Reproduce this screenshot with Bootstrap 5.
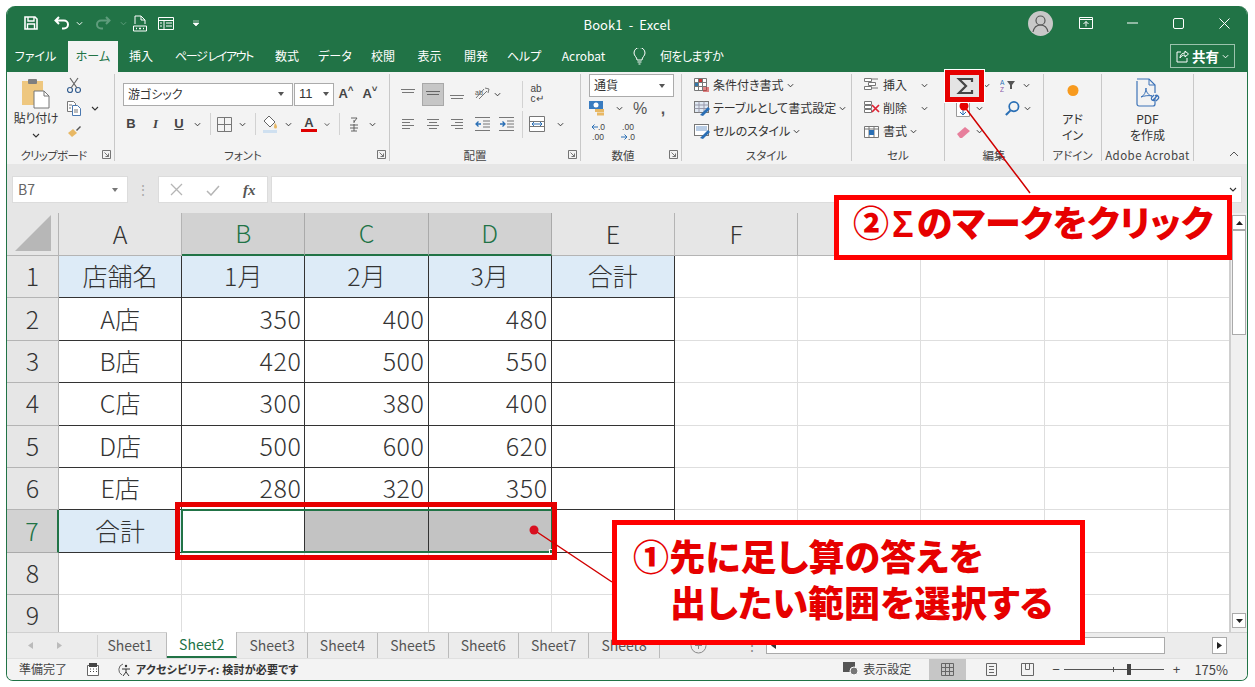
<!DOCTYPE html>
<html lang="ja"><head><meta charset="utf-8"><title>Book1 - Excel</title>
<link href="https://cdn.jsdelivr.net/npm/bootstrap@5.3.0/dist/css/bootstrap.min.css" rel="stylesheet">
<style>
html,body{margin:0;height:687px;overflow:hidden;background:#fff}
body{font-family:"Noto Sans CJK JP","Noto Sans",sans-serif;font-feature-settings:"palt";color:#333;font-size:12px;line-height:1.2}
.stage{width:1255px;height:687px;padding:6px 7px 0 6px}
.xwin{width:1242px;height:675px;border:1px solid #217346;border-top:0;border-radius:9px 9px 7px 7px;overflow:hidden;background:#f3f3f3}
.tbar{height:34px;background:#217346;color:#fff}
.tabsr{height:32px;background:#217346;color:#fff}
.side{flex:1 1 0;min-width:0}
.ce{display:flex;align-items:center;justify-content:center;flex:none}
.w6{width:6px}.w12{width:12px}.w14{width:14px}.w16{width:16px}.w18{width:18px}.w19{width:19px}.w20{width:20px}.w22{width:22px}.w24{width:24px}.w25{width:25px}.w26{width:26px}.w28{width:28px}.w30{width:30px}.w46{width:46px}.w47{width:47px}.w50{width:50px}.w69{width:69px}.w100{width:100px}.w61{width:61px}
.ms5{margin-left:5px}.ms6{margin-left:6px}.ms10{margin-left:10px}.ms14{margin-left:14px}.ms18{margin-left:18px}.ms20{margin-left:20px}.ms32{margin-left:32px}.ms47{margin-left:47px}
.tabon{height:31px;margin-top:1px;background:#f3f3f3;color:#217346}
.pagelay{letter-spacing:-1.4px}
.ask{letter-spacing:-.6px}
.ttl{font-size:13px;letter-spacing:.1px;white-space:pre;margin-top:3px}
.sharebtn{width:65px;height:24px;border:1px solid #9cc3ad;gap:3px;margin-right:12px;font-weight:700;font-size:13.5px}
.ribbon{height:92px;background:#f3f3f3;padding:2px 0 3px}
.grp{height:87px;border-right:1px solid #c8c8c8;position:relative;flex:none}
.g1{width:108px}.g2{width:275px}.g3{width:191px}.g4{width:101px}.g5{width:170px}.g6{width:93px}.g7{width:99px}.g8{width:58px}.g9{width:92px}
.glabel{position:absolute;left:0;right:0;bottom:-2px;text-align:center;font-size:11.5px;color:#444;line-height:16px}
.lp14{padding-right:14px;letter-spacing:-.7px}.lp18{padding-right:18px}.lp20{padding-right:20px}.lp16{padding-right:16px}
.lsp{letter-spacing:.45px}
.launch{position:absolute;right:3px;bottom:2px;width:9px;height:9px}
.r23{height:23px}.r30{height:30px}
.pt5{padding-top:5px}.pt2x{padding-top:2px}
.sepv{width:1px;background:#d2d2d2;display:block}
.h22{height:22px}.h27{height:27px}
.pastelbl{margin-top:2px;letter-spacing:-.3px}
.lh16{line-height:16px}
.fld{background:#fff;border:1px solid #ababab;height:23px;font-size:12px}
.fsel1{width:170px}.fsel2{width:40px;margin-left:1px;font-family:"Liberation Sans",sans-serif;font-size:13px}
.fsel3{width:85px}
.activ{background:#c6c6c6;border:1px solid #a8a8a8;height:23px;width:22px;margin:0 2px}
.ltr{font-family:"Liberation Sans",sans-serif;font-weight:700;font-size:13px;color:#444}
.stline{height:23px;font-size:12px;white-space:nowrap;gap:3px}
.dec{font-family:"Liberation Sans",sans-serif;font-size:8.500px;line-height:10px;text-align:center;color:#444}
.dec>span{display:block}
.fbar{height:49px;background:#e6e6e6;padding:12px 5px 0}
.fb1{width:116px;height:27px;background:#fff;border:1px solid #dcdcdc;font-size:14px;color:#666;padding:0 5px}
.fbdots{width:30px;height:27px;color:#aaa;font-size:14px}
.fb2{width:110px;height:27px;background:#fff;border:1px solid #dcdcdc}
.fb3{flex:1;height:27px;background:#fff;border:1px solid #dcdcdc;margin-left:3px}
.sheetwrap{height:419px;background:#fff}
.cellgrid{display:grid;grid-template-columns:52px repeat(10,123.2px);grid-template-rows:43px repeat(9,42.4px);width:1222px;height:419px;overflow:hidden;font-size:25px;font-weight:300;font-feature-settings:normal;color:#333;line-height:1;flex:none}
.cellgrid>div{display:flex;align-items:center;justify-content:center;border-right:1px solid #dedede;border-bottom:1px solid #dedede;min-width:0;padding-bottom:2px}
.cellgrid>.hx{background:#e6e6e6;border-right-color:#b4b4b4;border-bottom-color:#b4b4b4}
.cellgrid>.hz{background:#d2d2d2;color:#217346;border-right-color:#aaa;border-bottom:2px solid #217346}
.cellgrid>.hw{background:#d2d2d2;color:#217346;border-right:2px solid #217346;border-bottom-color:#aaa}
.cellgrid>.bx{border-right-color:#333;border-bottom-color:#333}
.cellgrid>.bl{background:#ddebf7}
.cellgrid>.gr{background:#c3c3c3}
.cellgrid>.nb{justify-content:flex-end;padding-right:3px;letter-spacing:.6px}
.vscroll{width:19px;background:#f0f0f0;border-left:2px solid #cfcfcf;padding:2px 1px 0 1px}
.vbtn{height:15px;background:#fff;border:1px solid #aaa}
.vthumb{height:105px;background:#fff;border:1px solid #aaa}
.tabbar{height:26px;background:#ececec;font-size:14px;color:#555;font-feature-settings:normal;border-top:1px solid #d0d0d0}
.shtab{height:100%;flex:none;width:70.4px;border-right:1px solid #bbb}
.shfirst{width:69px;padding-right:4px}
.shon{background:#fff;color:#217346;border-bottom:2px solid #217346;margin-top:-1px;height:26px;border-right:1px solid #bbb}
.hscroll{width:399px;height:17px;background:#fff;border:1px solid #aaa}
.hbtn{width:15px;height:17px;background:#fff;border:1px solid #aaa}
.stbar{height:22px;background:#f3f3f3;font-size:12px;color:#444;border-top:1px solid #e0e0e0}
.acc{font-weight:700;font-size:11px;color:#333;letter-spacing:.2px}
.vwon{width:37px;height:100%;background:#c6c6c6}
.zoomtr{width:100px;height:1px;background:#555;position:relative}
.thumbz{position:absolute;left:63px;top:-5px;width:4px;height:11px;background:#444}
.tickz{position:absolute;left:49px;top:-2px;width:1px;height:5px;background:#555}
.zsign{font-family:"Liberation Sans",sans-serif;font-size:13px}
.zpct{font-size:13px;margin-right:19px}
.ovr{position:absolute;z-index:5}
.redbox{border:5px solid #f00;background:#fff;color:#e60000;font-family:"Liberation Sans","Noto Sans CJK JP",sans-serif;font-weight:900;font-size:36px;white-space:nowrap}
.bx1{left:834px;top:195px;width:398px;height:65px;padding-bottom:5px}
.sigm{margin:0 3px}
.bx2{left:612px;top:520px;width:473px;height:125px;padding:11px 0 0 16px;letter-spacing:.2px}
.cline{display:block;height:46px;line-height:46px}
.ind{padding-left:37px;letter-spacing:.1px}
.sumbx{left:945px;top:70px;width:39px;height:32px;border:5px solid #e60000;outline:1px solid #fff;background:#e4e4e4}
.rangebx{left:175px;top:502px;width:382px;height:58px;border:5px solid #e60000}
.selbx{left:181px;top:509px;width:372px;height:44px;border:2px solid #217346}
.handle{right:-3px;bottom:-3px;width:5px;height:5px;background:#217346;border:1px solid #fff;position:absolute}
.lines{left:0;top:0;pointer-events:none}
</style></head>
<body>
<svg width="0" height="0" class="position-absolute"><defs>
<symbol id="chv" viewBox="0 0 8 5"><path d="M1 1l3 3 3-3" fill="none" stroke="currentColor" stroke-width="1.1"/></symbol>
<symbol id="lau" viewBox="0 0 9 9"><path d="M.5 8.500v-8h8v8z M2.500 2.500l4 4M6.500 3.500v3h-3" fill="none" stroke="#666" stroke-width=".9"/></symbol>
</defs></svg>
<div class="stage position-relative">
<div class="xwin d-flex flex-column">
 <div class="tbar d-flex align-items-center">
  <div class="side d-flex align-items-center">
   <span class="ce w16 ms-3 me-2"><svg width="14" height="14" viewBox="0 0 14 14"><path d="M1 1h10l2 2v10H1z" fill="none" stroke="#fff" stroke-width="1.6"/><path d="M4 1v4h6V1M3.500 13V8h7v5" fill="none" stroke="#fff" stroke-width="1.4"/></svg></span>
   <span class="ce w22 ms-1"><svg width="16" height="14" viewBox="0 0 16 14"><path d="M5 1L1.500 4.500 5 8M2 4.500h8a4 4 0 0 1 0 8H8" fill="none" stroke="#fff" stroke-width="2"/></svg></span>
   <span class="ce w12"><svg width="7" height="5"><use href="#chv"/></svg></span>
   <span class="ce w28 ms-1" style="color:#5f9c7c"><svg width="16" height="14" viewBox="0 0 16 14"><path d="M11 1l3.500 3.500L11 8M14 4.500H6a4 4 0 0 0 0 8h2" fill="none" stroke="currentColor" stroke-width="2"/></svg></span>
   <span class="ce w12" style="color:#5f9c7c"><svg width="7" height="5"><use href="#chv"/></svg></span>
   <span class="ce w22"><svg width="14" height="17" viewBox="0 0 14 17"><path d="M2 9V1h6l4 4v4M8 1v4h4M0.500 11h13v5H.5z" fill="none" stroke="#fff" stroke-width="1"/><path d="M3 13.500h1M6 13.500h2M10 13.500h1" stroke="#fff" stroke-width="1.500"/></svg></span>
   <span class="ce w30"><svg width="16" height="13" viewBox="0 0 16 13"><path d="M.5.500h15v12H.5zM.5 3.500h15M6 3.500v9M8 6h6M8 9h6M2 6h2M2 9h2" fill="none" stroke="#fff" stroke-width="1"/></svg></span>
   <span class="ce w30"><svg width="6" height="7" viewBox="0 0 6 7"><path d="M0 1h6M0 3l3 3 3-3z" fill="#fff" stroke="#fff" stroke-width=".6"/></svg></span>
  </div>
  <div class="ttl">Book1  -  Excel</div>
  <div class="side d-flex align-items-center justify-content-end">
   <span class="ce w46"><svg width="25" height="25" viewBox="0 0 25 25"><circle cx="12.500" cy="12.500" r="12.500" fill="#c8c8c8"/><circle cx="12.500" cy="9.500" r="4.500" fill="none" stroke="#555" stroke-width="1.200"/><path d="M5 21c1-5 4-7 7.500-7s6.500 2 7.500 7" fill="none" stroke="#555" stroke-width="1.200"/></svg></span>
   <span class="ce w46"><svg width="14" height="12" viewBox="0 0 14 12"><path d="M.5.500h13v11H.5zM.5 2.500h13M7 9.500V4.500M4.500 7L7 4.500 9.500 7" fill="none" stroke="#fff"/></svg></span>
   <span class="ce w46"><svg width="11" height="2"><path d="M0 1h11" stroke="#fff"/></svg></span>
   <span class="ce w46"><svg width="11" height="11"><rect x=".5" y=".5" width="10" height="10" rx="1.500" fill="none" stroke="#fff"/></svg></span>
   <span class="ce w46"><svg width="11" height="11"><path d="M.5.500l10 10M10.500.500l-10 10" stroke="#fff"/></svg></span>
  </div>
 </div>
 <div class="tabsr d-flex align-items-center">
  <span class="ce w61 pe-1">ファイル</span>
  <span class="ce w50 tabon">ホーム</span>
  <span class="ce w46">挿入</span><span class="ce w100 pagelay">ページ レイアウト</span><span class="ce w46">数式</span><span class="ce w50">データ</span><span class="ce w46">校閲</span><span class="ce w47">表示</span><span class="ce w46">開発</span><span class="ce w50">ヘルプ</span><span class="ce w69">Acrobat</span>
  <span class="ce w22 ms-2 ps-1"><svg width="13" height="17" viewBox="0 0 13 17"><path d="M4 12c0-3-3-4-3-7a5.500 5.500 0 0 1 11 0c0 3-3 4-3 7zM4.500 14h4M5.500 16h2" fill="none" stroke="#fff"/></svg></span>
  <span class="ms-2 ps-1 ask">何をしますか</span>
  <span class="ms-auto sharebtn d-flex align-items-center justify-content-center"><svg width="13" height="13" viewBox="0 0 13 13"><path d="M5 2H1v10h10V8M4 8c0-3 2-5 5-5V1l3.500 3L9 7V5C7 5 5 6 4 8z" fill="none" stroke="#fff"/></svg>共有<svg width="7" height="5"><use href="#chv"/></svg></span>
 </div>

 <div class="ribbon d-flex">
  <!-- clipboard -->
  <div class="grp g1 d-flex">
   <div class="d-flex flex-column align-items-center w50 ms-1">
    <svg class="mt-1" width="30" height="31" viewBox="0 0 30 31"><rect x="1" y="3" width="21" height="24" fill="#eec77f"/><rect x="7" y="1" width="9" height="5" rx="1" fill="#7f7f7f"/><path d="M13 13h10l5 5v12H13z" fill="#fff" stroke="#777"/><path d="M23 13v5h5" fill="none" stroke="#777"/></svg>
    <span class="pastelbl">貼り付け</span>
    <svg class="mt-2" width="8" height="5"><use href="#chv"/></svg>
   </div>
   <div class="d-flex flex-column">
    <span class="ce r23 w18 ms-1"><svg width="14" height="17" viewBox="0 0 14 17"><circle cx="3" cy="13" r="2.500" fill="none" stroke="#355f91" stroke-width="1.200"/><circle cx="11" cy="13" r="2.500" fill="none" stroke="#355f91" stroke-width="1.200"/><path d="M4 11L11 1M10 11L3 1" stroke="#666" stroke-width="1.200"/></svg></span>
    <span class="ce r23 w18 ms-1"><svg width="14" height="15" viewBox="0 0 14 15"><path d="M.5.500h6l2 2v8h-8z" fill="#fff" stroke="#777"/><path d="M5.500 4.500h5l3 3v7h-8z" fill="#fff" stroke="#4a78b0"/><path d="M2 4h3M2 7h2M7 9h4M7 11h4" stroke="#777"/></svg></span>
    <span class="ce r23 w18 ms-1"><svg width="15" height="13" viewBox="0 0 15 13"><path d="M1 8l5-4 4 4-5 4z" fill="#e8b864"/><path d="M9 5l4-4 1 1-4 4z" fill="#555"/></svg></span>
   </div>
   <div class="d-flex flex-column ms-2"><span class="r23"></span><span class="ce r23"><svg width="8" height="5"><use href="#chv"/></svg></span></div>
   <div class="glabel lp14">クリップボード</div><svg class="launch"><use href="#lau"/></svg>
  </div>
  <!-- font -->
  <div class="grp g2 pt5">
   <div class="d-flex align-items-center r30 ms-2">
    <div class="fld fsel1 d-flex align-items-center ps-1">游ゴシック<svg class="ms-auto me-2" width="6" height="4"><path d="M0 0h6L3 4z" fill="#555"/></svg></div>
    <div class="fld fsel2 d-flex align-items-center ps-1">11<svg class="ms-auto me-1" width="6" height="4"><path d="M0 0h6L3 4z" fill="#555"/></svg></div>
    <span class="ce w24 ltr">A<sup>˄</sup></span><span class="ce w24 ltr">A<sup>˅</sup></span>
   </div>
   <div class="d-flex align-items-center r30 ms-1">
    <span class="ce w24 ltr">B</span>
    <span class="ce w25 ltr fst-italic" style="font-family:'Liberation Serif'">I</span>
    <span class="ce w22 ltr text-decoration-underline">U</span>
    <span class="ce w14"><svg width="7" height="5"><use href="#chv"/></svg></span>
    <span class="ce w12"><i class="sepv h22"></i></span>
    <span class="ce w16"><svg width="15" height="15" viewBox="0 0 15 15"><path d="M.5.500h14v14H.5zM7.500.500v14M.5 7.500h14" fill="none" stroke="#777"/></svg></span>
    <span class="ce w20"><svg width="7" height="5"><use href="#chv"/></svg></span>
    <span class="ce w6"><i class="sepv h22"></i></span>
    <span class="ce w24"><svg width="17" height="18" viewBox="0 0 17 18"><path d="M7 1l6 6-5 5-6-6z" fill="#fff" stroke="#666"/><path d="M13 8c1.500 1.500 2 3 2 4a1.500 1.500 0 0 1-3 0c0-1 .5-2.500 1-4z" fill="#e8b864"/><rect x="1" y="15" width="14" height="3" fill="#cfe0f0"/></svg></span>
    <span class="ce w12"><svg width="7" height="5"><use href="#chv"/></svg></span>
    <span class="ce w30 flex-column"><b class="ltr lh-1">A</b><svg width="16" height="3"><rect width="16" height="3" fill="#e00000"/></svg></span>
    <span class="ce w6"><svg width="7" height="5"><use href="#chv"/></svg></span>
    <span class="ce w18"><i class="sepv h22"></i></span>
    <span class="ce w12"><svg width="8" height="15" viewBox="0 0 8 15"><path d="M1 1h6L4 5M4 3v3M0 8h8M0 11h8M4 7v7M1 14h6" fill="none" stroke="#555" stroke-width=".9"/></svg></span>
    <span class="ce w24"><svg width="7" height="5"><use href="#chv"/></svg></span>
   </div>
   <div class="glabel lp18">フォント</div><svg class="launch"><use href="#lau"/></svg>
  </div>
  <!-- align -->
  <div class="grp g3 pt5">
   <div class="d-flex align-items-center r30 ms6">
    <span class="ce w24"><svg width="14" height="10"><path d="M0 .5h14M1 3.500h12" stroke="#777"/></svg></span>
    <span class="ce w26"><span class="activ ce"><svg width="14" height="10"><path d="M0 2.500h14M1 5.500h12" stroke="#666"/></svg></span></span>
    <span class="ce w22"><svg width="14" height="10"><path d="M0 6.500h14M1 9.500h12" stroke="#777"/></svg></span>
    <span class="ce w6"></span>
    <span class="ce w16"><svg width="16" height="14" viewBox="0 0 16 14"><path d="M2 11L10 2M5 12l8-8M11 1l4 1-1 4" fill="none" stroke="#777"/><text x="1" y="8" font-size="7" fill="#555" font-family="Liberation Sans">ab</text></svg></span>
    <span class="ce w14"><svg width="7" height="5"><use href="#chv"/></svg></span>
    <span class="ce w12"></span>
    <span class="ce w12"><i class="sepv h27"></i></span>
    <span class="ce w18 lh-1 ltr fw-normal" style="font-size:10px">ab<br>c↵</span>
   </div>
   <div class="d-flex align-items-center r30 ms6">
    <span class="ce w24"><svg width="12" height="10"><path d="M0 .5h12M0 3.500h8M0 6.500h12M0 9.500h8" stroke="#777"/></svg></span>
    <span class="ce w26"><svg width="12" height="10"><path d="M0 .5h12M2 3.500h8M0 6.500h12M2 9.500h8" stroke="#777"/></svg></span>
    <span class="ce w22"><svg width="12" height="10"><path d="M0 .5h12M4 3.500h8M0 6.500h12M4 9.500h8" stroke="#777"/></svg></span>
    <span class="ce w28"><svg width="15" height="14" viewBox="0 0 15 14"><path d="M0 .5h15M0 13.500h15M8 4h7M8 7h7M8 10h7" stroke="#777"/><path d="M6 7H1M3.500 4.500L1 7l2.500 2.500" fill="none" stroke="#2a6fb5" stroke-width="1.300"/></svg></span>
    <span class="ce w20"><svg width="15" height="14" viewBox="0 0 15 14"><path d="M0 .5h15M0 13.500h15M8 4h7M8 7h7M8 10h7" stroke="#777"/><path d="M1 7h5M3.500 4.500L6 7 3.500 9.500" fill="none" stroke="#2a6fb5" stroke-width="1.300"/></svg></span>
    <span class="ce w12"><i class="sepv h27"></i></span>
    <span class="ce w18"><svg width="16" height="16" viewBox="0 0 16 16"><path d="M.5.500h15v15H.5zM.5 5.500h15M.5 10.500h15" fill="#fff" stroke="#777"/><path d="M3 8h10M5 6l-2 2 2 2M11 6l2 2-2 2" fill="none" stroke="#2a6fb5"/></svg></span>
    <span class="ce w28"><svg width="7" height="5"><use href="#chv"/></svg></span>
   </div>
   <div class="glabel lp20">配置</div><svg class="launch"><use href="#lau"/></svg>
  </div>
  <!-- number -->
  <div class="grp g4">
   <div class="fld fsel3 d-flex align-items-center ps-1 ms-2">通貨<svg class="ms-auto me-2" width="6" height="4"><path d="M0 0h6L3 4z" fill="#555"/></svg></div>
   <div class="d-flex align-items-center r23 ms-2">
    <span class="ce w16"><svg width="16" height="15" viewBox="0 0 16 15"><rect width="14" height="8" fill="#3a7cc0"/><circle cx="7" cy="4" r="2.500" fill="#fff"/><rect x="6" y="8" width="9" height="3" fill="#e8b864"/><rect x="8" y="11.500" width="7" height="3" fill="#e8b864"/></svg></span>
    <span class="ce w20 ms-1"><svg width="7" height="5"><use href="#chv"/></svg></span>
    <span class="ce w22 fs-6 fw-normal" style="color:#555;font-family:'Liberation Sans'">%</span>
    <span class="ce w24 fw-bold fs-6" style="color:#555;font-family:'Liberation Sans'">,</span>
   </div>
   <div class="d-flex align-items-center r23 ms-2">
    <span class="ce w18"><span class="dec"><span><svg width="7" height="6" viewBox="0 0 7 6"><path d="M7 3H1M3.500.5L1 3l2.500 2.500" fill="none" stroke="#2a6fb5"/></svg>.0</span><span>.00</span></span></span>
    <span class="ce w12"></span>
    <span class="ce w18"><span class="dec"><span>.00</span><span><svg width="7" height="6" viewBox="0 0 7 6"><path d="M0 3h6M3.500.5L6 3 3.500 5.500" fill="none" stroke="#2a6fb5"/></svg>.0</span></span></span>
   </div>
   <div class="glabel lp16">数値</div><svg class="launch"><use href="#lau"/></svg>
  </div>
  <!-- styles -->
  <div class="grp g5 ps-2">
   <div class="d-flex align-items-center stline ps-1"><svg width="16" height="15" viewBox="0 0 16 15"><path d="M.5.500h12v12H.5zM.5 4.500h12M.5 8.500h12M4.500.5v12M8.500.5v12" fill="#fff" stroke="#777"/><rect x="5" y="1" width="3" height="3" fill="#c33"/><rect x="1" y="5" width="3" height="3" fill="#37a"/><rect x="9" y="9" width="6" height="5" fill="#c33" opacity=".6"/></svg>条件付き書式 <svg width="7" height="5"><use href="#chv"/></svg></div>
   <div class="d-flex align-items-center stline ps-1"><svg width="16" height="15" viewBox="0 0 16 15"><rect x=".5" y=".5" width="14" height="11" fill="#dfe8f2" stroke="#777"/><path d="M.5 4h14M.5 7.500h14M5 .5v11M10 .5v11" stroke="#99a"/><path d="M6 14l8-8 2 2-7 7z" fill="#2a6fb5"/></svg>テーブルとして書式設定 <svg width="7" height="5"><use href="#chv"/></svg></div>
   <div class="d-flex align-items-center stline ps-1"><svg width="16" height="15" viewBox="0 0 16 15"><rect x=".5" y=".5" width="14" height="11" fill="#fff" stroke="#777"/><rect x="2" y="2" width="11" height="5" fill="#b8cce4"/><path d="M6 14l8-8 2 2-7 7z" fill="#2a6fb5"/></svg>セルのスタイル <svg width="7" height="5"><use href="#chv"/></svg></div>
   <div class="glabel">スタイル</div>
  </div>
  <!-- cells -->
  <div class="grp g6 ps-2">
   <div class="d-flex align-items-center stline ps-1"><svg width="16" height="15" viewBox="0 0 16 15"><path d="M.5.500h7v3h-7zM4.500 4.500h7v3h-7zM.5 8.500h7v3h-7zM8 1h6M8 10h6" fill="#fff" stroke="#777"/></svg>挿入<svg class="ms-auto me-3" width="7" height="5"><use href="#chv"/></svg></div>
   <div class="d-flex align-items-center stline ps-1"><svg width="16" height="15" viewBox="0 0 16 15"><path d="M.5.500h7v3h-7zM.5 4.500h7v3h-7zM.5 8.500h7v3h-7z" fill="#fff" stroke="#777"/><path d="M8 4l7 7M15 4l-7 7" stroke="#d23" stroke-width="1.700"/></svg>削除<svg class="ms-auto me-3" width="7" height="5"><use href="#chv"/></svg></div>
   <div class="d-flex align-items-center stline ps-1"><svg width="16" height="15" viewBox="0 0 16 15"><path d="M.5 2.500h14v11H.5zM.5 5h14M5 2.500v11M10 2.500v11" fill="#fff" stroke="#777"/><rect x="5" y="6" width="5" height="5" fill="#2a6fb5"/></svg>書式 <svg width="7" height="5"><use href="#chv"/></svg></div>
   <div class="glabel">セル</div>
  </div>
  <!-- edit -->
  <div class="grp g7">
   <div class="d-flex align-items-center r23 ms-2">
    <span class="ce w20"></span><span class="w6"></span><span class="ce w14"><svg width="7" height="5"><use href="#chv"/></svg></span>
    <span class="w6"></span>
    <span class="ce w16"><svg width="15" height="13" viewBox="0 0 15 13"><text x="0" y="6" font-size="6.500" fill="#2a6fb5" font-family="Liberation Sans">A</text><text x="0" y="13" font-size="6.500" fill="#8a5aa8" font-family="Liberation Sans">Z</text><path d="M7 2h8l-3 4v4h-2V6z" fill="#555"/></svg></span>
    <span class="ce w14 ms-1"><svg width="7" height="5"><use href="#chv"/></svg></span>
   </div>
   <div class="d-flex align-items-center r23 ms-2">
    <span class="ce w20"><svg width="14" height="16" viewBox="0 0 14 16"><path d="M.5.500h13v15H.5z" fill="#fff" stroke="#999"/><path d="M7 7v7M4 11l3 3 3-3" fill="none" stroke="#2a6fb5"/></svg></span>
    <span class="ce w12"><svg width="7" height="5"><use href="#chv"/></svg></span>
    <span class="w19"></span>
    <span class="ce w16"><svg width="17" height="17" viewBox="0 0 17 17"><circle cx="10.500" cy="6.500" r="5" fill="none" stroke="#2a6fb5" stroke-width="1.800"/><path d="M7 10.500l-5 5" stroke="#2a6fb5" stroke-width="2.200"/></svg></span>
    <span class="ce w14"><svg width="7" height="5"><use href="#chv"/></svg></span>
   </div>
   <div class="d-flex align-items-center r23 ms-2">
    <span class="ce w20"><svg width="15" height="12" viewBox="0 0 15 12"><path d="M1 8l8-7 5 4-8 7H4z" fill="#e77f9c"/></svg></span>
    <span class="ce w12"><svg width="7" height="5"><use href="#chv"/></svg></span>
   </div>
   <div class="glabel">編集</div>
  </div>
  <!-- addin -->
  <div class="grp g8 d-flex flex-column align-items-center">
   <svg class="mt-1 mb-2" width="12" height="25" viewBox="0 0 12 12"><circle cx="6" cy="6" r="5.500" fill="#f79a1e"/></svg>
   <span class="lh16 text-center">アド<br>イン</span>
   <div class="glabel">アドイン</div>
  </div>
  <!-- acrobat -->
  <div class="grp g9 d-flex flex-column align-items-center">
   <svg class="mt-1" width="28" height="31" viewBox="0 0 28 31"><path d="M3 1h12l6 6v8M21 20v6a2 2 0 0 1-2 2H5a2 2 0 0 1-2-2V3" fill="none" stroke="#3d73b8" stroke-width="1.200"/><path d="M15 1v6h6" fill="none" stroke="#3d73b8"/><path d="M7 19c3-1 5-5 5-9 0 4 2 7 6 8-4-1-8 0-11 1z" fill="none" stroke="#3d73b8"/><path d="M19 22l4-4M22 23l2-2a2 2 0 0 0-3-3M20 17l-2 2a2 2 0 0 0 3 3" fill="none" stroke="#3d73b8" stroke-width="1.200"/></svg>
   <span class="text-center lh16 pt2x">PDF<br>を作成</span>
   <div class="glabel lsp">Adobe Acrobat</div>
  </div>
  <div class="flex-grow-1 d-flex justify-content-end align-items-end pe-2 pb-1"><svg width="10" height="6" viewBox="0 0 10 6"><path d="M1 5l4-4 4 4" fill="none" stroke="#555"/></svg></div>
 </div>

 <div class="fbar d-flex">
  <div class="fb1 d-flex align-items-center">B7<svg class="ms-auto me-1" width="6" height="4"><path d="M0 0h6L3 4z" fill="#777"/></svg></div>
  <div class="ce fbdots">⋮</div>
  <div class="fb2 d-flex align-items-center justify-content-around">
   <svg width="13" height="13"><path d="M1 1l11 11M12 1L1 12" stroke="#b5b5b5" stroke-width="1.300"/></svg>
   <svg width="14" height="12"><path d="M1 7l4 4 8-9" fill="none" stroke="#b5b5b5" stroke-width="1.500"/></svg>
   <span class="fst-italic fw-semibold" style="font-family:'Liberation Serif';font-size:15px;color:#555">fx</span>
  </div>
  <div class="fb3 d-flex align-items-center justify-content-end pe-1"><svg width="8" height="5"><use href="#chv"/></svg></div>
 </div>

 <div class="sheetwrap d-flex">
  <div class="cellgrid">
   <div class="hx"><svg width="36" height="36" viewBox="0 0 36 36"><path d="M36 0v36H0z" fill="#b7b7b7"/></svg></div><div class="hx">A</div><div class="hz">B</div><div class="hz">C</div><div class="hz">D</div><div class="hx">E</div><div class="hx">F</div><div class="hx"></div><div class="hx"></div><div class="hx"></div><div class="hx"></div>
   <div class="hx">1</div><div class="bx bl">店舗名</div><div class="bx bl">1月</div><div class="bx bl">2月</div><div class="bx bl">3月</div><div class="bx bl">合計</div><div></div><div></div><div></div><div></div><div></div>
   <div class="hx">2</div><div class="bx">A店</div><div class="bx nb">350</div><div class="bx nb">400</div><div class="bx nb">480</div><div class="bx"></div><div></div><div></div><div></div><div></div><div></div>
   <div class="hx">3</div><div class="bx">B店</div><div class="bx nb">420</div><div class="bx nb">500</div><div class="bx nb">550</div><div class="bx"></div><div></div><div></div><div></div><div></div><div></div>
   <div class="hx">4</div><div class="bx">C店</div><div class="bx nb">300</div><div class="bx nb">380</div><div class="bx nb">400</div><div class="bx"></div><div></div><div></div><div></div><div></div><div></div>
   <div class="hx">5</div><div class="bx">D店</div><div class="bx nb">500</div><div class="bx nb">600</div><div class="bx nb">620</div><div class="bx"></div><div></div><div></div><div></div><div></div><div></div>
   <div class="hx">6</div><div class="bx">E店</div><div class="bx nb">280</div><div class="bx nb">320</div><div class="bx nb">350</div><div class="bx"></div><div></div><div></div><div></div><div></div><div></div>
   <div class="hw">7</div><div class="bx bl">合計</div><div class="bx"></div><div class="bx gr"></div><div class="bx gr"></div><div class="bx"></div><div></div><div></div><div></div><div></div><div></div>
   <div class="hx">8</div><div></div><div></div><div></div><div></div><div></div><div></div><div></div><div></div><div></div><div></div>
   <div class="hx">9</div><div></div><div></div><div></div><div></div><div></div><div></div><div></div><div></div><div></div><div></div>
  </div>
  <div class="vscroll d-flex flex-column">
   <div class="vbtn ce"><svg width="7" height="4"><path d="M0 4h7L3.500 0z" fill="#222"/></svg></div>
   <div class="vthumb"></div>
   <div class="vbtn ce mt-auto mb-1"><svg width="7" height="4"><path d="M0 0h7L3.500 4z" fill="#222"/></svg></div>
  </div>
 </div>

 <div class="tabbar d-flex align-items-center">
  <span class="ce w46"><svg width="5" height="7"><path d="M5 0v7L0 3.500z" fill="#bbb"/></svg></span>
  <span class="ce w12"><svg width="5" height="7"><path d="M0 0v7l5-3.500z" fill="#bbb"/></svg></span>
  <span class="sepv h22 ms32"></span>
  <span class="ce shtab shfirst">Sheet1</span>
  <span class="ce shtab shon">Sheet2</span>
  <span class="ce shtab">Sheet3</span><span class="ce shtab">Sheet4</span><span class="ce shtab">Sheet5</span><span class="ce shtab">Sheet6</span><span class="ce shtab">Sheet7</span><span class="ce shtab">Sheet8</span>
  <span class="ce w46 ms-3"><svg width="17" height="17" viewBox="0 0 17 17"><circle cx="8.500" cy="8.500" r="7.500" fill="none" stroke="#888"/><path d="M8.500 5v7M5 8.500h7" stroke="#888"/></svg></span>
  <span class="ce w28 ms-3" style="color:#888">⋮</span>
  <span class="hscroll d-flex align-items-center ps-1"><svg width="5" height="7"><path d="M5 0v7L0 3.500z" fill="#333"/></svg></span>
  <span class="hbtn ce ms47"><svg width="5" height="7"><path d="M0 0v7l5-3.500z" fill="#222"/></svg></span>
 </div>
 <div class="stbar d-flex align-items-center">
  <span class="ms-2 ps-1">準備完了</span>
  <svg class="ms20" width="12" height="13" viewBox="0 0 12 13"><path d="M.5 2.500h11v10H.5z" fill="#fff" stroke="#666"/><rect x="2" y="0" width="8" height="4" fill="#444"/><path d="M3 6h1M6 6h1M9 6h1M3 8.500h1M6 8.500h1M9 8.500h1" stroke="#444"/></svg>
  <svg class="ms18" width="15" height="14" viewBox="0 0 15 14"><path d="M6 1a6 6 0 0 0-1 11" fill="none" stroke="#666"/><circle cx="9" cy="3" r="1.200" fill="#333"/><path d="M5 6h8M9 6v3M6 13l3-4 3 4" fill="none" stroke="#333"/></svg>
  <span class="acc ms-1">アクセシビリティ: 検討が必要です</span>
  <span class="ms-auto d-flex align-items-center gap-1"><svg width="16" height="14" viewBox="0 0 16 14"><rect width="12" height="10" fill="#555"/><circle cx="11" cy="9" r="4" fill="#777" stroke="#fff"/></svg>表示設定</span>
  <span class="ce vwon ms18"><svg width="13" height="13" viewBox="0 0 13 13"><path d="M.5.500h12v12H.5zM4.500.5v12M8.500.5v12M.5 4.500h12M.5 8.500h12" fill="none" stroke="#666"/></svg></span>
  <span class="ce w46 ps-1"><svg width="11" height="13" viewBox="0 0 11 13"><path d="M.5.500h10v12H.5zM3 3.500h5M3 6.500h5M3 9.500h5" fill="none" stroke="#666"/></svg></span>
  <span class="ce w30"><svg width="13" height="13" viewBox="0 0 13 13"><path d="M.5.500h12v12H.5zM4.500.5v6h4v-6" fill="none" stroke="#666"/></svg></span>
  <span class="ms10 zsign">−</span><span class="zoomtr mx-1 d-block"><i class="tickz"></i><i class="thumbz"></i></span><span class="ms5 zsign">+</span>
  <span class="ms14 zpct">175%</span>
 </div>
</div>

<!-- annotation overlay -->
<div class="ovr selbx"><i class="handle"></i></div>
<div class="ovr rangebx"></div>
<svg class="ovr lines" width="1255" height="687"><path d="M964 106L1030 193M534 530L612 582" stroke="#d00000" stroke-width="1.500"/><circle cx="964" cy="106" r="4.500" fill="#e60000"/><circle cx="534" cy="530" r="4.500" fill="#d81020"/></svg>
<div class="ovr sumbx ce"><svg width="18" height="18" viewBox="0 0 18 18"><path d="M16 5V2H3l7 7-7 7h13v-3" fill="none" stroke="#444" stroke-width="2.200"/></svg></div>
<div class="ovr redbox bx1 d-flex align-items-center justify-content-center">②<span class="sigm">Σ</span>のマークをクリック</div>
<div class="ovr redbox bx2"><span class="cline">①先に足し算の答えを</span><span class="cline ind">出したい範囲を選択する</span></div>
</div>
<script src="https://cdn.jsdelivr.net/npm/bootstrap@5.3.0/dist/js/bootstrap.bundle.min.js"></script>
</body></html>
